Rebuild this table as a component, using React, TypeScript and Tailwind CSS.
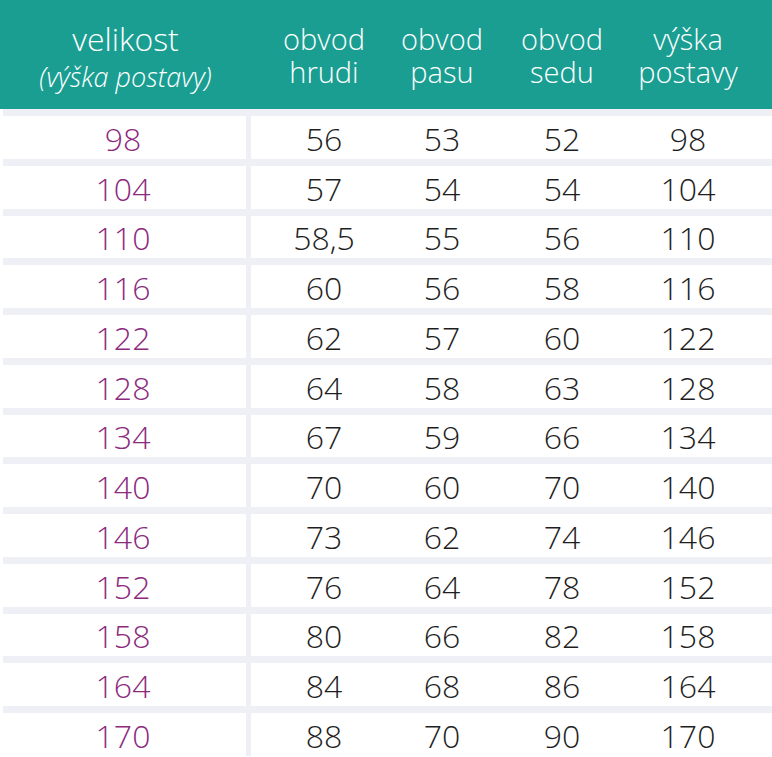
import React from "react";

const rows: [string, string, string, string, string][] = [
  ["98", "56", "53", "52", "98"],
  ["104", "57", "54", "54", "104"],
  ["110", "58,5", "55", "56", "110"],
  ["116", "60", "56", "58", "116"],
  ["122", "62", "57", "60", "122"],
  ["128", "64", "58", "63", "128"],
  ["134", "67", "59", "66", "134"],
  ["140", "70", "60", "70", "140"],
  ["146", "73", "62", "74", "146"],
  ["152", "76", "64", "78", "152"],
  ["158", "80", "66", "82", "158"],
  ["164", "84", "68", "86", "164"],
  ["170", "88", "70", "90", "170"],
];

const font = { fontFamily: '"Open Sans", "Liberation Sans", sans-serif' };

export default function App() {
  return (
    <div className="w-[772px] h-[757px] overflow-hidden bg-white" style={font}>
      <div className="h-[109px] bg-[#1a9e92] flex text-white font-light">
        <div className="w-[251px] flex flex-col items-center justify-center pt-[6px]">
          <div className="text-[32px] leading-[38px]">velikost</div>
          <div className="text-[27px] leading-[38px] italic">(výška postavy)</div>
        </div>
        <div className="flex-1 flex pl-[13px] pr-[20px] text-[29px] leading-[33px]">
          <div className="w-[120px] flex flex-col items-center justify-center">
            <div>obvod</div>
            <div>hrudi</div>
          </div>
          <div className="w-[116px] flex flex-col items-center justify-center">
            <div>obvod</div>
            <div>pasu</div>
          </div>
          <div className="w-[124px] flex flex-col items-center justify-center">
            <div>obvod</div>
            <div>sedu</div>
          </div>
          <div className="w-[128px] flex flex-col items-center justify-center">
            <div>výška</div>
            <div>postavy</div>
          </div>
        </div>
      </div>
      {rows.map((r, i) => (
        <div key={i} className="flex flex-col">
          <div className="h-[7px] flex">
            <div className="w-[3px] bg-white" />
            <div className="flex-1 bg-[#eff0f5]" />
          </div>
          <div className="h-[42.75px] flex items-center text-[32px] font-light pt-[3px]">
            <div className="w-[246px] text-center text-[#8c2a7e]">{r[0]}</div>
            <div className="w-[5px] self-stretch -mt-[3px] bg-[#eff0f5]" />
            <div className="flex-1 flex pl-[13px] pr-[20px] text-[#1e1e1e]">
              <div className="w-[120px] text-center">{r[1]}</div>
              <div className="w-[116px] text-center">{r[2]}</div>
              <div className="w-[124px] text-center">{r[3]}</div>
              <div className="w-[128px] text-center">{r[4]}</div>
            </div>
          </div>
        </div>
      ))}
    </div>
  );
}
